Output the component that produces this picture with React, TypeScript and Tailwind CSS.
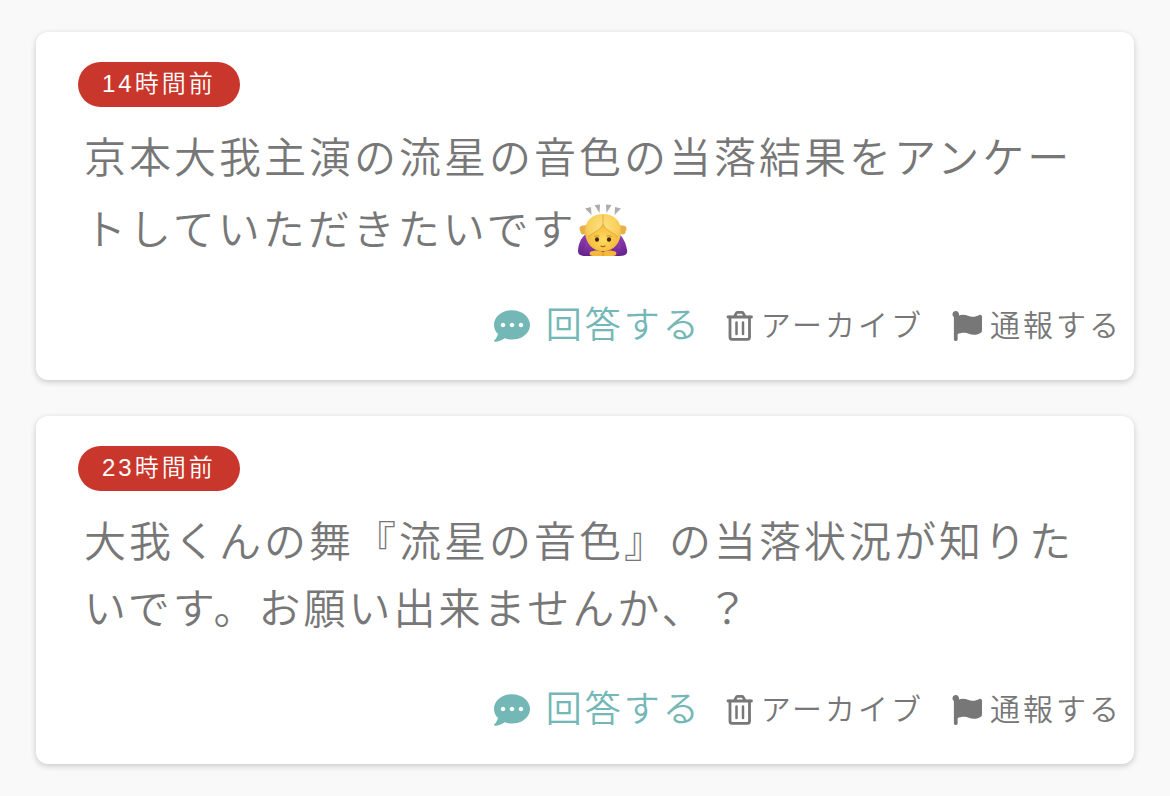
import type { ReactNode } from "react";
import { FaCommentDots, FaFlag } from "react-icons/fa";

function TrashIcon() {
  return (
    <svg viewBox="0 0 27 30" aria-hidden="true" fill="none" stroke="currentColor" strokeLinecap="round" strokeLinejoin="round" className="h-[30px] w-[27px]">
      <path d="M2 6H25.500" strokeWidth="2.800" />
      <path d="M8.500 5.500L10.200 2.300C10.400 1.700 10.900 1.400 11.500 1.400H16C16.600 1.400 17.100 1.700 17.300 2.300L19 5.500" strokeWidth="2.800" />
      <path d="M4 6V26.300C4 27.600 4.800 28.400 6.100 28.400H21.400C22.700 28.400 23.500 27.600 23.500 26.300V6" strokeWidth="2.800" />
      <path d="M10.500 11.500V23M17 11.500V23" strokeWidth="2.500" />
    </svg>
  );
}

function BowingWoman() {
  return (
    <svg
      viewBox="0 0 52 56"
      role="img"
      aria-label="お辞儀する女性"
      className="mt-[9px] ml-px inline-block h-14 w-[52px] align-[-12px]"
    >
      <defs>
        <radialGradient id="hair" cx="50%" cy="35%" r="70%">
          <stop offset="0" stopColor="#fde284" />
          <stop offset="0.6" stopColor="#f9cf5a" />
          <stop offset="1" stopColor="#e2a935" />
        </radialGradient>
        <radialGradient id="skin" cx="50%" cy="55%" r="60%">
          <stop offset="0" stopColor="#ffdd60" />
          <stop offset="1" stopColor="#f4b435" />
        </radialGradient>
        <linearGradient id="sleeve" x1="0" y1="0" x2="0" y2="1">
          <stop offset="0" stopColor="#9440b4" />
          <stop offset="1" stopColor="#642189" />
        </linearGradient>
      </defs>
      <g fill="#adadad">
        <path d="M8 7.500L14 6L14.500 14Z" />
        <path d="M17.500 4L23 3.500L22.500 12Z" />
        <path d="M29 3.500L34.500 4L29.500 12Z" />
        <path d="M38 6L44 7.500L37.500 14Z" />
      </g>
      <path d="M10 32C4 36 1 44 1 50C1 54 4 55 9 55H43C48 55 51 53 50 49C49 42 46 36 41 32Z" fill="url(#sleeve)" />
      <path d="M10 24C6 25 3 24 2.500 27C2 29 4 30 3.500 31C3.500 34 7 34 11 32Z" fill="#e7b04a" />
      <path d="M42 24C46 25 49 24 49.500 27C50 29 48 30 48.500 31C48.500 34 45 34 41 32Z" fill="#e7b04a" />
      <path d="M8 30C8 20 15 13 26 13C37 13 44 20 44 30C44 42 36 51 26 51C16 51 8 42 8 30Z" fill="url(#hair)" />
      <path d="M26 23C24 29 15 32 11 36C13 44 19 51 26 51C33 51 39 44 41 36C37 32 28 29 26 23Z" fill="url(#skin)" />
      <path d="M26 14V23C24 29 15 32 11 36M26 23C28 29 37 32 41 36" fill="none" stroke="#dba63d" strokeWidth="0.800" />
      <ellipse cx="20" cy="38.500" rx="2.100" ry="2.300" fill="#452712" />
      <ellipse cx="32" cy="38.500" rx="2.100" ry="2.300" fill="#452712" />
      <path d="M17.500 35.500C19 34.500 20.500 34.500 22 35M30 35C31.500 34.500 33 34.500 34.500 35.500" fill="none" stroke="#b9822c" strokeWidth="0.800" strokeLinecap="round" />
      <path d="M24 45C25 45.700 27 45.700 28 45" fill="none" stroke="#a9531c" strokeWidth="1.100" strokeLinecap="round" />
      <path d="M9 41C12 46 18 49 23 50H29C34 49 40 46 43 41L45 53L36 55H15L6 53Z" fill="url(#sleeve)" />
      <path d="M13 51C17 49 22 49 26 51C30 49 35 49 39 51C40 53 39 55 36 55H16C13 55 12 53 13 51Z" fill="#f3b739" />
      <path d="M26 51.500V55" stroke="#cb8a25" strokeWidth="0.800" />
    </svg>
  );
}

function QuestionCard({ age, children }: { age: string; children: ReactNode }) {
  return (
    <article className="flex min-h-[348px] flex-col rounded-xl bg-white pt-[30px] pr-3 pb-[30px] pl-[42px] shadow-[0_2px_6px_rgba(0,0,0,0.2)]">
      <time className="h-[45px] self-start rounded-full bg-[#c9372c] px-6 text-2xl leading-[44px] text-white">{age}</time>
      <p className="mt-[18px] mr-9 ml-[6px] text-[42px] leading-[67px]">{children}</p>
      <div className="mt-auto flex items-center justify-end">
        <button type="button" className="flex items-center gap-4 text-4xl leading-[48px] text-[#74b7b7]">
          <FaCommentDots className="size-9" />
          回答する
        </button>
        <button type="button" className="ml-6 flex items-center gap-2 text-3xl leading-[48px]">
          <TrashIcon />
          アーカイブ
        </button>
        <button type="button" className="ml-7 flex items-center gap-2 text-3xl leading-[48px]">
          <FaFlag className="size-[30px]" />
          通報する
        </button>
      </div>
    </article>
  );
}

export default function App() {
  return (
    <main className="flex min-h-screen flex-col gap-9 bg-[#f9f9f9] px-9 py-8 font-['Liberation_Sans','Noto_Sans_CJK_JP',sans-serif] font-[350] tracking-[3px] text-[#777777]" lang="ja">
      <QuestionCard age="14時間前">
        京本大我主演の流星の音色の当落結果をアンケートしていただきたいです
        <BowingWoman />
      </QuestionCard>
      <QuestionCard age="23時間前">大我くんの舞『流星の音色』の当落状況が知りたいです。お願い出来ませんか、？</QuestionCard>
    </main>
  );
}
